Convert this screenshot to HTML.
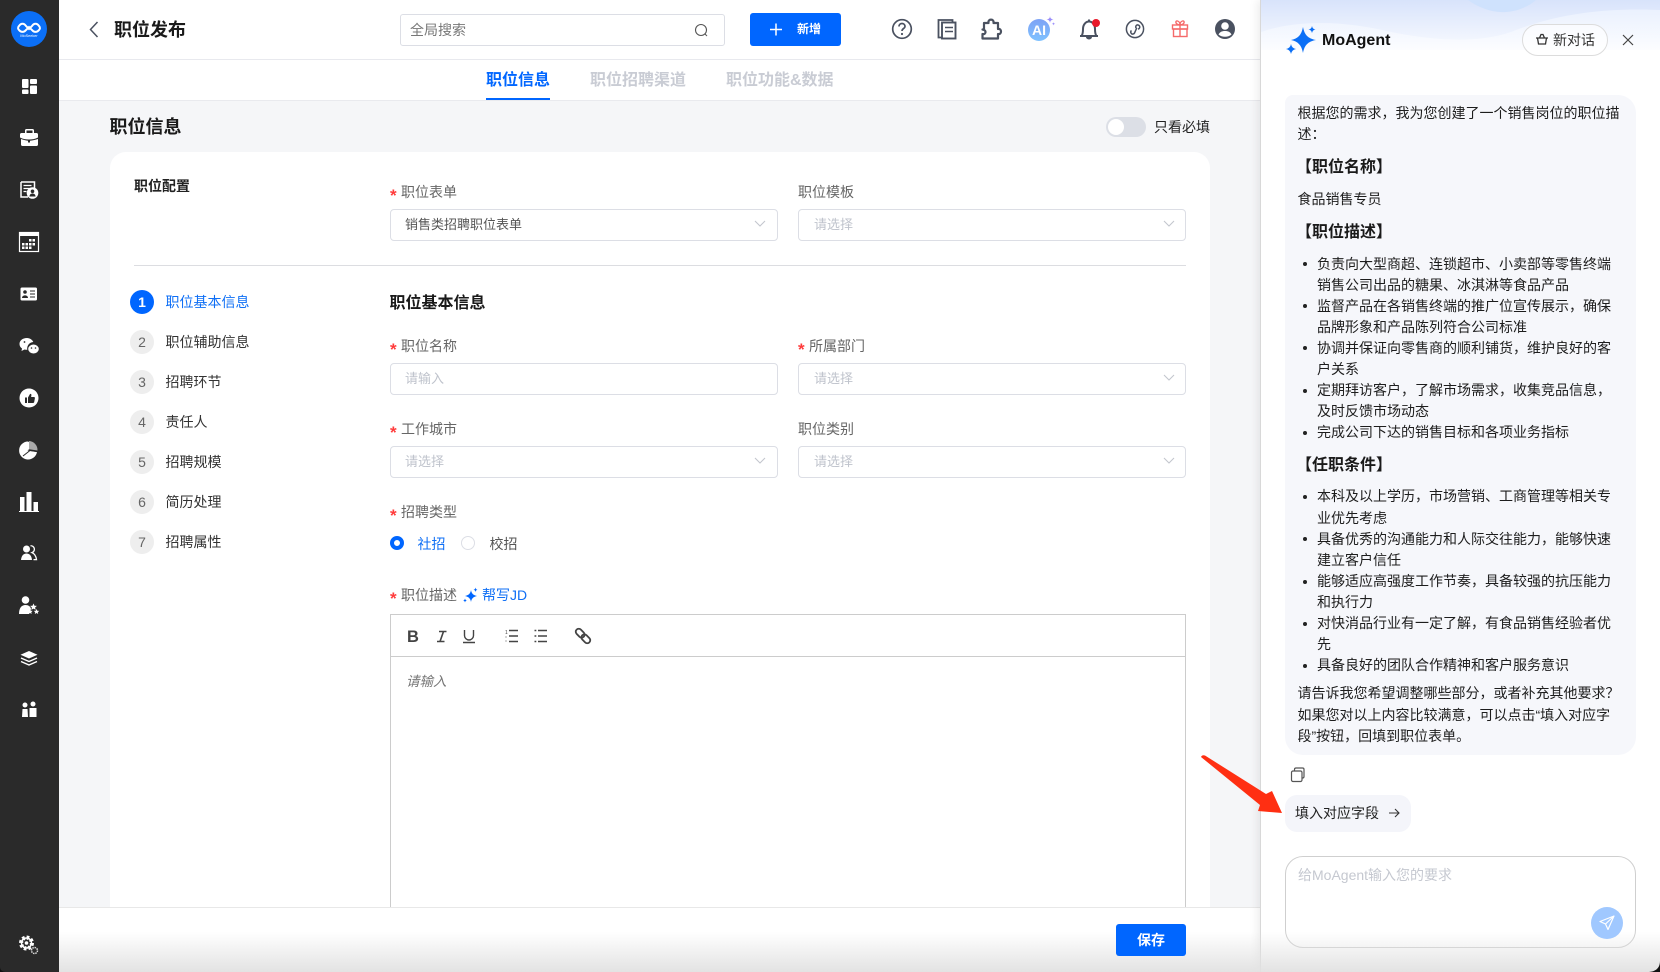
<!DOCTYPE html>
<html lang="zh-CN">
<head>
<meta charset="utf-8">
<title>职位发布</title>
<style>
*{box-sizing:border-box;margin:0;padding:0}
html,body{width:1660px;height:972px;overflow:hidden;background:#fff}
body{position:relative;font-family:"Liberation Sans","Noto Sans CJK SC",sans-serif;font-size:14px;color:#1d1d1d}
.abs{position:absolute}
.t{position:absolute;white-space:nowrap;line-height:20px;height:20px}
.lab{color:#666}
.star{color:#ff3b3b;position:absolute;white-space:nowrap;line-height:20px;height:20px;font-size:17px;font-weight:700}
.box{position:absolute;background:#fff;border:1px solid #dcdee5;border-radius:4px}
.ph{color:#bfc3cc;font-size:13px}
.num{position:absolute;left:130px;width:24px;height:24px;border-radius:50%;background:#eee;color:#666;text-align:center;line-height:24px;font-size:14px}
.b{font-weight:700}
.line{position:absolute;left:1297.5px;white-space:nowrap;line-height:21px;height:21px;color:#1d1d1d}
.li{left:1317px}
.dot{position:absolute;left:1303px;width:4px;height:4px;border-radius:50%;background:#222}
.h{font-weight:700;font-size:16px;left:1296px;line-height:22px;height:22px;color:#1a1a1a}
</style>
</head>
<body>
<!-- main background -->
<div class="abs" style="left:59px;top:0;width:1201px;height:60px;background:#fff;border-bottom:1px solid #e8e9ee"></div>
<div class="abs" style="left:59px;top:60px;width:1201px;height:41px;background:#fff;border-bottom:1px solid #e9eaee"></div>
<div class="abs" style="left:59px;top:101px;width:1201px;height:806px;background:#f5f6f8"></div>
<!-- sidebar -->
<div class="abs" style="left:0;top:0;width:59px;height:972px;background:#2a2a2a"></div>

<!-- header -->
<div class="t b" style="left:114px;top:20px;font-size:18px;color:#1a1a1a">职位发布</div>
<div class="box" style="left:400px;top:14px;width:325px;height:32px;border-radius:3px"></div>
<div class="t" style="left:410px;top:20px;color:#777">全局搜索</div>
<div class="abs" style="left:750px;top:13px;width:91px;height:33px;background:#0066ff;border-radius:3px"></div>
<div class="t b" style="left:797px;top:19px;color:#fff;font-size:12px">新增</div>

<!-- tabs -->
<div class="t b" style="left:486px;top:71px;font-size:16px;color:#0066ff">职位信息</div>
<div class="abs" style="left:486px;top:98px;width:64px;height:2px;background:#0066ff"></div>
<div class="t b" style="left:590px;top:71px;font-size:16px;color:#c9ccd4">职位招聘渠道</div>
<div class="t b" style="left:726px;top:71px;font-size:16px;color:#c9ccd4">职位功能&amp;数据</div>

<!-- page title -->
<div class="t b" style="left:109.5px;top:117px;font-size:18px;color:#1a1a1a">职位信息</div>
<div class="abs" style="left:1106px;top:117px;width:40px;height:20px;border-radius:10px;background:#dcdfe6"></div>
<div class="abs" style="left:1108px;top:119px;width:16px;height:16px;border-radius:50%;background:#fff"></div>
<div class="t" style="left:1154px;top:116.500px;color:#222">只看必填</div>

<!-- card -->
<div class="abs" style="left:110px;top:152px;width:1100px;height:780px;background:#fff;border-radius:16px 16px 0 0"></div>
<div class="t b" style="left:134px;top:176px;color:#222">职位配置</div>
<div class="abs" style="left:134px;top:265px;width:1052px;height:1px;background:#dcdde1"></div>

<!-- top form -->
<div class="star" style="left:390px;top:186px">*</div>
<div class="t lab" style="left:401px;top:182px">职位表单</div>
<div class="box" style="left:390px;top:209px;width:388px;height:32px"></div>
<div class="t" style="left:405px;top:214.500px;color:#555;font-size:13px">销售类招聘职位表单</div>
<div class="t lab" style="left:798px;top:182px">职位模板</div>
<div class="box" style="left:798px;top:209px;width:388px;height:32px"></div>
<div class="t ph" style="left:814px;top:214.500px">请选择</div>

<!-- steps -->
<div class="num" style="top:290px;background:#0066ff;color:#fff;font-weight:700">1</div>
<div class="t" style="left:165.5px;top:292px;color:#0f6ff5">职位基本信息</div>
<div class="num" style="top:330px">2</div><div class="t" style="left:165.5px;top:332px;color:#333">职位辅助信息</div>
<div class="num" style="top:370px">3</div><div class="t" style="left:165.5px;top:372px;color:#333">招聘环节</div>
<div class="num" style="top:410px">4</div><div class="t" style="left:165.5px;top:412px;color:#333">责任人</div>
<div class="num" style="top:450px">5</div><div class="t" style="left:165.5px;top:452px;color:#333">招聘规模</div>
<div class="num" style="top:490px">6</div><div class="t" style="left:165.5px;top:492px;color:#333">简历处理</div>
<div class="num" style="top:530px">7</div><div class="t" style="left:165.5px;top:532px;color:#333">招聘属性</div>

<!-- form body -->
<div class="t b" style="left:389.5px;top:292px;font-size:16px;color:#1a1a1a;margin-top:2px">职位基本信息</div>

<div class="star" style="left:390px;top:340px">*</div>
<div class="t lab" style="left:401px;top:336px">职位名称</div>
<div class="box" style="left:390px;top:363px;width:388px;height:32px"></div>
<div class="t ph" style="left:405px;top:368.500px">请输入</div>

<div class="star" style="left:798px;top:340px">*</div>
<div class="t lab" style="left:809px;top:336px">所属部门</div>
<div class="box" style="left:798px;top:363px;width:388px;height:32px"></div>
<div class="t ph" style="left:814px;top:368.500px">请选择</div>

<div class="star" style="left:390px;top:423px">*</div>
<div class="t lab" style="left:401px;top:419px">工作城市</div>
<div class="box" style="left:390px;top:446px;width:388px;height:32px"></div>
<div class="t ph" style="left:405px;top:451.500px">请选择</div>

<div class="t lab" style="left:798px;top:419px">职位类别</div>
<div class="box" style="left:798px;top:446px;width:388px;height:32px"></div>
<div class="t ph" style="left:814px;top:451.500px">请选择</div>

<div class="star" style="left:390px;top:506px">*</div>
<div class="t lab" style="left:401px;top:502px">招聘类型</div>
<div class="abs" style="left:390px;top:536px;width:14px;height:14px;border-radius:50%;border:4.5px solid #0066ff;background:#fff"></div>
<div class="t" style="left:417.5px;top:534px;color:#0f6ff5">社招</div>
<div class="abs" style="left:461px;top:536px;width:14px;height:14px;border-radius:50%;border:1px solid #dcdee5;background:#fff"></div>
<div class="t" style="left:489.5px;top:534px;color:#555">校招</div>

<div class="star" style="left:390px;top:589px">*</div>
<div class="t lab" style="left:401px;top:585px">职位描述</div>
<div class="t" style="left:482px;top:585px;color:#0f6ff5">帮写JD</div>

<!-- editor -->
<div class="abs" style="left:390px;top:614px;width:796px;height:300px;background:#fff;border:1px solid #ccc"></div>
<div class="abs" style="left:390px;top:656px;width:796px;height:1px;background:#ccc"></div>
<div class="t" style="left:406px;top:672px;color:#777;font-style:italic;font-size:13.5px">请输入</div>

<!-- footer -->
<div class="abs" style="left:59px;top:907px;width:1201px;height:65px;background:#fff;border-top:1px solid #e8e8e8"></div>

<!-- panel -->
<div class="abs" style="left:1260px;top:0;width:400px;height:972px;background:#fff;border-left:1px solid #d8d8d8;box-shadow:-3px 0 8px rgba(0,0,0,.07)"></div>
<svg class="abs" style="left:1261px;top:0" width="399" height="80" viewBox="0 0 399 80">
<defs><linearGradient id="pg" x1="0" y1="0" x2="0" y2="1"><stop offset="0" stop-color="#d8e3fb"/><stop offset="1" stop-color="#f2f6fe"/></linearGradient>
<linearGradient id="pg2" x1="0" y1="0" x2="0" y2="1"><stop offset="0" stop-color="#e6eefe"/><stop offset="1" stop-color="#fcfdff"/></linearGradient></defs>
<rect x="0" y="0" width="399" height="50" fill="url(#pg2)"/>
<path d="M0 0H399V10C350 8 300 12 250 32C215 44 170 40 130 32C90 22 40 18 0 32Z" fill="url(#pg)"/>
<path d="M207 0C218 8 232 13 245 12C258 11 268 6 275 0Z" fill="#cfe2fd"/>
</svg>
<div class="t b" style="left:1322px;top:31px;font-size:16px;color:#111">MoAgent</div>
<div class="abs" style="left:1522px;top:24px;width:86px;height:32px;border:1px solid #dcdcdc;border-radius:16px;background:rgba(255,255,255,.6)"></div>
<div class="t" style="left:1553px;top:30px;color:#333">新对话</div>

<!-- bubble -->
<div class="abs" style="left:1285px;top:95px;width:351px;height:660px;background:#f6f7fb;border-radius:8px 18px 18px 18px"></div>
<div class="line" style="top:103px">根据您的需求，我为您创建了一个销售岗位的职位描</div>
<div class="line" style="top:124px">述：</div>
<div class="line h" style="top:157px">【职位名称】</div>
<div class="line" style="top:189px">食品销售专员</div>
<div class="line h" style="top:222px">【职位描述】</div>

<div class="dot" style="top:262px"></div>
<div class="line li" style="top:254px">负责向大型商超、连锁超市、小卖部等零售终端</div>
<div class="line li" style="top:275px">销售公司出品的糖果、冰淇淋等食品产品</div>
<div class="dot" style="top:304px"></div>
<div class="line li" style="top:296px">监督产品在各销售终端的推广位宣传展示，确保</div>
<div class="line li" style="top:317px">品牌形象和产品陈列符合公司标准</div>
<div class="dot" style="top:346px"></div>
<div class="line li" style="top:338px">协调并保证向零售商的顺利铺货，维护良好的客</div>
<div class="line li" style="top:359px">户关系</div>
<div class="dot" style="top:389px"></div>
<div class="line li" style="top:380px">定期拜访客户，了解市场需求，收集竞品信息，</div>
<div class="line li" style="top:401px">及时反馈市场动态</div>
<div class="dot" style="top:431px"></div>
<div class="line li" style="top:422px">完成公司下达的销售目标和各项业务指标</div>

<div class="line h" style="top:455px">【任职条件】</div>

<div class="dot" style="top:495px"></div>
<div class="line li" style="top:486px">本科及以上学历，市场营销、工商管理等相关专</div>
<div class="line li" style="top:507.500px">业优先考虑</div>
<div class="dot" style="top:537px"></div>
<div class="line li" style="top:529px">具备优秀的沟通能力和人际交往能力，能够快速</div>
<div class="line li" style="top:550px">建立客户信任</div>
<div class="dot" style="top:580px"></div>
<div class="line li" style="top:571px">能够适应高强度工作节奏，具备较强的抗压能力</div>
<div class="line li" style="top:592px">和执行力</div>
<div class="dot" style="top:622px"></div>
<div class="line li" style="top:613px">对快消品行业有一定了解，有食品销售经验者优</div>
<div class="line li" style="top:634px">先</div>
<div class="dot" style="top:664px"></div>
<div class="line li" style="top:655px">具备良好的团队合作精神和客户服务意识</div>

<div class="line" style="top:683px">请告诉我您希望调整哪些部分，或者补充其他要求？</div>
<div class="line" style="top:705px">如果您对以上内容比较满意，可以点击“填入对应字</div>
<div class="line" style="top:726px">段”按钮，回填到职位表单。</div>

<!-- fill button -->
<div class="abs" style="left:1285px;top:795px;width:126px;height:37px;background:#f4f5fa;border-radius:12px"></div>
<div class="t" style="left:1295px;top:803px;color:#222">填入对应字段</div>

<!-- input -->
<div class="abs" style="left:1285px;top:856px;width:351px;height:92px;border:1px solid #cfcfcf;border-radius:18px;background:#fff"></div>
<div class="t" style="left:1298px;top:865px;color:#c5c8d0">给MoAgent输入您的要求</div>

<!-- bottom window shading -->
<div class="abs" style="left:59px;top:932px;width:1601px;height:40px;background:linear-gradient(to bottom,rgba(225,225,225,0),rgba(225,225,225,.95))"></div>

<div class="abs" style="left:1116px;top:924px;width:70px;height:32px;border-radius:3px;background:#0066ff;color:#fff;text-align:center;line-height:32px;font-weight:700">保存</div>
<div class="abs" style="left:1591px;top:907px;width:32px;height:32px;border-radius:50%;background:#a0c8ff"></div>

<!-- icon overlay -->
<svg class="abs" style="left:0;top:0" width="1660" height="972" viewBox="0 0 1660 972">
<!-- logo -->
<circle cx="29" cy="29" r="18" fill="#0b6ff6"/>
<path d="M19 26c2-3 5-3 7 0l3 3 3-3c2-3 5-3 7 0 1.500 1.500 1 3 0 4-2 2.500-5 2.500-7 0l-3-3-3 3c-2 2.500-5 2.500-7 0-1-1-1.500-2.500 0-4z" fill="none" stroke="#fff" stroke-width="2"/>
<text x="29" y="37" font-size="3.800" fill="#fff" text-anchor="middle" font-family="Liberation Sans">MoSeeker</text>
<!-- 1 dashboard -->
<g fill="#fff"><rect x="22" y="79" width="6.500" height="9" rx="1"/><rect x="30" y="79" width="7" height="5" rx="1"/><rect x="22" y="89.500" width="6.500" height="4.500" rx="1"/><rect x="30" y="85.500" width="7" height="8.500" rx="1"/></g>
<!-- 2 briefcase -->
<path d="M25 133v-2.500c0-1 .7-1.500 1.500-1.500h6c.8 0 1.500.5 1.500 1.500V133h2.500c1 0 1.500.7 1.500 1.500v3c-3 1.500-6 2-9 2s-6-.5-9-2v-3c0-.8.5-1.500 1.500-1.500zm1.500 0h6v-2.500h-6zM21 139c2.500 1 5 1.500 7 1.700v1.800h2v-1.800c2.500-.2 5-.7 8-1.700v5.500c0 1-.7 1.500-1.500 1.500h-14c-.8 0-1.500-.5-1.500-1.500z" fill="#fff"/>
<!-- 3 doc person -->
<path d="M21 182h13.500v8.500" fill="none" stroke="#fff" stroke-width="1.500"/><path d="M21 182v15h7" fill="none" stroke="#fff" stroke-width="1.500"/>
<path d="M23.500 185.500h8M23.500 188.500h8M23.500 191.500h3" stroke="#fff" stroke-width="1.200"/>
<circle cx="32.500" cy="193" r="5.800" fill="#fff"/><circle cx="32.500" cy="191.300" r="1.800" fill="#2a2a2a"/><path d="M29.500 196.500c0-4 6-4 6 0z" fill="#2a2a2a"/>
<!-- 4 calendar -->
<rect x="19.500" y="232.500" width="19" height="19" fill="none" stroke="#fff" stroke-width="1.200"/><rect x="19" y="232" width="20" height="4" fill="#fff"/>
<g fill="#fff"><rect x="22" y="243" width="2.500" height="2.500"/><rect x="25.500" y="243" width="2.500" height="2.500"/><rect x="29" y="243" width="2.500" height="2.500"/><rect x="32.500" y="243" width="2.500" height="2.500"/><rect x="29" y="239" width="2.500" height="2.500"/><rect x="32.500" y="239" width="2.500" height="2.500"/><rect x="22" y="246.500" width="2.500" height="2.500"/><rect x="25.500" y="246.500" width="2.500" height="2.500"/><rect x="29" y="246.500" width="2.500" height="2.500"/></g>
<!-- 5 id card -->
<rect x="20.500" y="287.500" width="16.500" height="13" rx="1.500" fill="#fff"/><circle cx="25" cy="292" r="1.800" fill="#2a2a2a"/><path d="M22 298c0-3.500 6-3.500 6 0z" fill="#2a2a2a"/><path d="M30 291h5M30 294h5M30 297h5" stroke="#2a2a2a" stroke-width="1"/>
<!-- 6 wechat -->
<path d="M27 338c-4.500 0-7.500 2.500-7.500 6 0 2 1 3.500 2.500 4.500l-.5 2.500 3-1.500c1 .2 1.700.3 2.800.3a6.500 6.500 0 0 1 6-7.800C32.500 340 30 338 27 338z" fill="#fff"/>
<ellipse cx="33.500" cy="349" rx="5.300" ry="4.500" fill="#fff"/><circle cx="31.500" cy="348" r=".8" fill="#2a2a2a"/><circle cx="35.500" cy="348" r=".8" fill="#2a2a2a"/><circle cx="24.500" cy="342" r=".9" fill="#2a2a2a"/>
<!-- 7 thumb -->
<circle cx="29" cy="398" r="9.500" fill="#fff"/><path d="M25 397.500h2V403h-2zM28 397.500l2-3.500c1-.5 1.500.3 1.400 1.200l-.3 1.800H34c.7 0 1 .5.900 1.200l-.7 3.800c-.1.500-.5 1-1.200 1H28z" fill="#2a2a2a"/>
<!-- 8 pie -->
<path d="M28 441.500a9 9 0 1 0 9 10.500l-9.500-1.500 7-5.500-6.500-3.500z" fill="#fff"/><path d="M29 441a9 9 0 0 1 8.500 9.500l-8.500-1.300z" fill="#aaa"/><path d="M23 456l7-5.500 7.800 1.300" fill="none" stroke="#2a2a2a" stroke-width="1"/>
<!-- 9 bars -->
<path d="M20 497h4.500v14H20zM26.500 492h5v19h-5zM33.500 502h4.500v9h-4.500z" fill="#fff"/><rect x="19" y="511" width="20" height="1" fill="#fff"/>
<!-- 10 users -->
<circle cx="26.500" cy="549" r="3.500" fill="#fff"/><path d="M21 560c.5-5 3-6.500 5.500-6.500s5 1.500 5.500 6.500z" fill="#fff"/><path d="M30.500 545.800a3.500 3.500 0 0 1 1.500 6.800c2.500 1 4 3.500 4.500 7H33.500" fill="none" stroke="#fff" stroke-width="1.300"/>
<!-- 11 person stars -->
<circle cx="25.500" cy="600" r="3.800" fill="#fff"/><path d="M19 614c0-6 2.500-9 6.500-9 3 0 5 1.500 5.500 4l-2 5z" fill="#fff"/>
<path d="M33.500 603.500l1 2.200 2.400.2-1.800 1.600.6 2.400-2.200-1.300-2.200 1.300.6-2.400-1.800-1.600 2.400-.2zM36.500 609l.8 1.700 1.900.2-1.400 1.300.4 1.800-1.700-1-1.700 1 .4-1.800-1.400-1.300 1.900-.2zM30 609l.8 1.700 1.800.2-1.300 1.300.3 1.800-1.600-1-1.600 1 .3-1.800-1.300-1.300 1.800-.2z" fill="#fff"/>
<!-- 12 layers -->
<path d="M29 651l8.500 3.800-8.500 3.700-8.500-3.700z" fill="#fff"/><path d="M21 658l8 3.500 8-3.500M21 661.500l8 3.500 8-3.500" fill="none" stroke="#fff" stroke-width="1.400"/>
<!-- 13 persons -->
<circle cx="25" cy="705" r="2.500" fill="#fff"/><circle cx="33" cy="704" r="2.500" fill="#fff"/><path d="M22.500 709h5l.5 8h-6zM29.500 708h7v9h-7z" fill="#fff"/>
<!-- 14 gears -->
<circle cx="26.500" cy="943" r="4.500" fill="none" stroke="#fff" stroke-width="6" stroke-dasharray="2 1.530"/><circle cx="26.500" cy="943" r="5" fill="none" stroke="#fff" stroke-width="1.500"/><circle cx="26.500" cy="943" r="3.400" fill="#2a2a2a"/><circle cx="26.500" cy="943" r="1.800" fill="#fff"/>
<circle cx="34.500" cy="950.500" r="3" fill="none" stroke="#ddd" stroke-width="1.500" stroke-dasharray="1.500 .8"/>

<!-- header icons -->
<path d="M97.500 22l-7 7.500 7 7.500" fill="none" stroke="#4a5160" stroke-width="1.500"/>
<circle cx="701" cy="30" r="5.500" fill="none" stroke="#555" stroke-width="1.100"/><path d="M705 34l2 2" stroke="#555" stroke-width="1.100"/>
<path d="M770 29.500h12M776 23.500v12" stroke="#fff" stroke-width="1.500"/>
<!-- question -->
<circle cx="902" cy="29" r="9.300" fill="none" stroke="#4a5160" stroke-width="1.700"/>
<path d="M899 26.500c0-4 6-4 6 0 0 2-3 2-3 4.500" fill="none" stroke="#4a5160" stroke-width="1.700"/><circle cx="902" cy="34" r="1.100" fill="#4a5160"/>
<!-- docs -->
<path d="M942 37.500h-3.500V20h14v2" fill="none" stroke="#4a5160" stroke-width="1.800"/><rect x="942" y="22.500" width="13.500" height="16" fill="#fff" stroke="#4a5160" stroke-width="1.900"/><path d="M945 27.500h8M945 31.500h8" stroke="#4a5160" stroke-width="1.600"/>
<!-- puzzle -->
<path d="M984 23h4.500c-1-4.500 6-4.500 5 0h4.500v6c4-1 4 6 0 5v4.500h-15.500v-4.500c3.500 1 4.500-4 0-4.500h1.500z" fill="none" stroke="#4a5160" stroke-width="2.200" stroke-linejoin="round"/>
<!-- AI -->
<defs><linearGradient id="ai" x1="0" y1="0" x2="0" y2="1"><stop offset="0" stop-color="#7ea2f5"/><stop offset="1" stop-color="#7fc2ff"/></linearGradient></defs>
<circle cx="1039" cy="30" r="11" fill="url(#ai)"/>
<text x="1039" y="35" font-size="14" font-weight="700" fill="#fff" text-anchor="middle" font-family="Liberation Sans">AI</text>
<path d="M1050 16q0 3 3.500 3.500q-3.500 .5-3.500 3.500q0-3-3.500-3.500q3.500-.5 3.500-3.500zM1053.500 22q0 1.500 1.800 1.800q-1.800 .3-1.800 1.800q0-1.500-1.800-1.800q1.800-.3 1.800-1.800z" fill="#9a8dfb"/>
<!-- bell -->
<path d="M1089 19.500v2M1081.500 36c1.500-2 1.500-5 1.500-7 0-4 2.500-7.500 6-7.500s6 3.500 6 7.500c0 2 0 5 1.500 7zM1080 36h18" fill="none" stroke="#4a5160" stroke-width="2" stroke-linejoin="round"/><path d="M1086 37a3 2.500 0 0 0 6 0z" fill="#4a5160"/><circle cx="1096" cy="23" r="4" fill="#e8182a"/>
<!-- link circle -->
<circle cx="1135" cy="29" r="8.600" fill="none" stroke="#4a5160" stroke-width="1.500"/><path d="M1131.500 30.500a2 2 0 1 0 3 2.500l2-4.500a2 2 0 1 1 3-2.500 2 2 0 0 1-1.500 3" fill="none" stroke="#4a5160" stroke-width="1.500"/>
<!-- gift -->
<g fill="none" stroke="#f56a6a" stroke-width="1.400"><rect x="1172.500" y="25" width="15" height="4"/><rect x="1173.500" y="29" width="13.500" height="7.500"/><path d="M1180 25v11.500M1180 25c-5-.5-5-4.500-2.500-4 1.500.3 2.500 2 2.500 4zM1180 25c5-.5 5-4.500 2.500-4-1.500.3-2.500 2-2.500 4z"/></g>
<!-- user -->
<circle cx="1225" cy="29" r="10" fill="#4a5160"/><circle cx="1225" cy="26" r="3.800" fill="#fff"/><path d="M1218.500 34.500c1.500-3 4-3.500 6.500-3.500s5 .5 6.500 3.500c-3.500 3-9.500 3-13 0z" fill="#fff"/>

<!-- chevrons -->
<g fill="none" stroke="#c3c6ce" stroke-width="1.100"><path d="M755 221l5 5 5-5M1164 221l5 5 5-5M1164 375l5 5 5-5M755 458l5 5 5-5M1164 458l5 5 5-5"/></g>

<!-- help-write sparkles -->
<path d="M471 590c.6 3.500 2 5 6 6-4 1-5.400 2.500-6 6-.6-3.500-2-5-6-6 4-1 5.400-2.500 6-6zM475.500 587.500q.3 2 2 2.300q-1.700 .3-2 2.300q-.3-2-2-2.300q1.700-.3 2-2.300zM465 598.500q.3 1.700 1.900 2q-1.600 .3-1.900 2q-.3-1.700-1.900-2q1.600-.3 1.900-2z" fill="#0066ff"/>

<!-- editor toolbar -->
<text x="407" y="642" font-size="16.500" font-weight="700" fill="#444" font-family="Liberation Sans">B</text>
<path d="M439 631.500h7.500M437 641.500h7.500M443.500 631.500l-3.500 10" fill="none" stroke="#444" stroke-width="1.600"/>
<path d="M464.500 630v5.500a4.500 4.500 0 0 0 9 0V630M463 642.500h12" fill="none" stroke="#444" stroke-width="1.400"/>
<path d="M509 630.500h9M509 636h9M509 641.500h9M534.500 630.500h1.800M538 630.500h9M534.500 636h1.800M538 636h9M534.500 641.500h1.800M538 641.500h9" stroke="#444" stroke-width="1.500"/>
<text x="505" y="634" font-size="5" fill="#444" font-family="Liberation Sans">1</text><path d="M505 637h2M505 641h2" stroke="#aaa"/>
<g fill="none" stroke="#444" stroke-width="1.800" transform="rotate(45 583 636)"><rect x="574" y="633" width="10" height="6" rx="3"/><rect x="582" y="633" width="10" height="6" rx="3"/></g>

<!-- MoAgent logo -->
<path d="M1303 27C1304.500 35 1308 38.500 1316 40C1308 41.500 1304.500 45 1303 53C1301.500 45 1298 41.500 1291 40C1298 38.500 1301.500 35 1303 27z" fill="#0b6ff6"/>
<path d="M1312 26q.5 3 3.500 3.500q-3 .5-3.500 3.500q-.5-3-3.500-3.500q3-.5 3.500-3.500zM1291 44q.7 4.200 5 5q-4.300.8-5 5q-.7-4.200-5-5q4.300-.8 5-5z" fill="#0b6ff6"/>
<!-- basket -->
<path d="M1537.500 38h9l-1 6h-7zM1539.500 38l1.500-3.500h2l1.500 3.500M1536 38h12" fill="none" stroke="#333" stroke-width="1.300"/>
<!-- close -->
<path d="M1623 35l10 10M1633 35l-10 10" stroke="#444" stroke-width="1.200"/>
<!-- copy -->
<rect x="1291.500" y="771" width="10.500" height="10.500" rx="1.500" fill="#fff" stroke="#555" stroke-width="1.200"/><path d="M1294.500 771v-1.500c0-1 .5-1.500 1.500-1.500h6.500c1 0 1.500.5 1.500 1.500v7c0 1-.5 1.500-1.500 1.500h-.5" fill="none" stroke="#555" stroke-width="1.200"/>
<!-- arrow right -->
<path d="M1389 813h10M1395 809l4 4-4 4" fill="none" stroke="#333" stroke-width="1.100"/>
<!-- red annotation -->
<path d="M1201 757Q1202 754.500 1205 755.500L1266 794L1272 791L1282 813L1258 811L1260 805z" fill="#ff2f12"/>
<!-- send -->
<path d="M1614 916l-14 5.500 5.500 2.500 2.500 5.500zM1605.500 924l8.500-8" fill="none" stroke="#fff" stroke-width="1.200" stroke-linejoin="round"/>
<!-- corners -->
<path d="M1660 972h-11q11-1 11-11z" fill="#111"/>
<path d="M0 972h5q-5-1-5-5z" fill="#111"/>
</svg>
</body>
</html>
